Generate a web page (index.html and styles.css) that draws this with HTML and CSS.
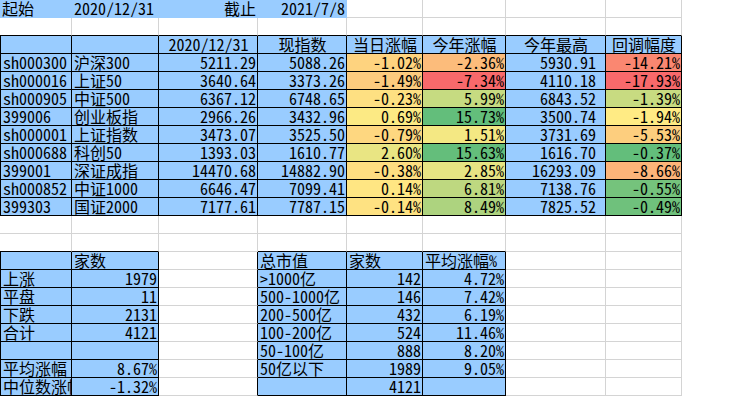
FILE: index.html
```html
<!DOCTYPE html>
<html lang="zh-CN">
<head>
<meta charset="utf-8">
<title>指数涨幅</title>
<link rel="stylesheet" href="styles.css">
</head>
<body>
<div class="sheet">
  <!-- row 1 -->
  <div class="c top">起始</div>
  <div class="c top">2020/12/31</div>
  <div class="c top r">截止</div>
  <div class="c top r">2021/7/8</div>
  <div class="c"></div><div class="c"></div><div class="c"></div><div class="c"></div>
  <!-- row 2 -->
  <div class="c kb"></div><div class="c kb"></div><div class="c kb"></div><div class="c kb"></div>
  <div class="c kb"></div><div class="c kb"></div><div class="c kb"></div><div class="c kb"></div>
  <!-- row 3 header -->
  <div class="c k kl b"></div>
  <div class="c k b"></div>
  <div class="c k b m">2020/12/31</div>
  <div class="c k b m">现指数</div>
  <div class="c k b m">当日涨幅</div>
  <div class="c k b m">今年涨幅</div>
  <div class="c k b m">今年最高</div>
  <div class="c k b m">回调幅度</div>
  <!-- data -->
  <div class="c k kl b">sh000300</div><div class="c k b">沪深300</div>
  <div class="c k b r">5211.29</div><div class="c k b r">5088.26</div>
  <div class="c k r" style="background-color:#FED37F">-1.02%</div>
  <div class="c k r" style="background-color:#FCBC7B">-2.36%</div>
  <div class="c k b r g">5930.91</div>
  <div class="c k r" style="background-color:#FA8771">-14.21%</div>

  <div class="c k kl b">sh000016</div><div class="c k b">上证50</div>
  <div class="c k b r">3640.64</div><div class="c k b r">3373.26</div>
  <div class="c k r" style="background-color:#FDCB7E">-1.49%</div>
  <div class="c k r" style="background-color:#F8696B">-7.34%</div>
  <div class="c k b r g">4110.18</div>
  <div class="c k r" style="background-color:#F8696B">-17.93%</div>

  <div class="c k kl b">sh000905</div><div class="c k b">中证500</div>
  <div class="c k b r">6367.12</div><div class="c k b r">6748.65</div>
  <div class="c k r" style="background-color:#FEE082">-0.23%</div>
  <div class="c k r" style="background-color:#C6DB81">5.99%</div>
  <div class="c k b r g">6843.52</div>
  <div class="c k r" style="background-color:#C8DB81">-1.39%</div>

  <div class="c k kl b">399006</div><div class="c k b">创业板指</div>
  <div class="c k b r">2966.26</div><div class="c k b r">3432.96</div>
  <div class="c k r" style="background-color:#FCEA84">0.69%</div>
  <div class="c k r" style="background-color:#63BE7B">15.73%</div>
  <div class="c k b r g">3500.74</div>
  <div class="c k r" style="background-color:#FFEB84">-1.94%</div>

  <div class="c k kl b">sh000001</div><div class="c k b">上证指数</div>
  <div class="c k b r">3473.07</div><div class="c k b r">3525.50</div>
  <div class="c k r" style="background-color:#FED780">-0.79%</div>
  <div class="c k r" style="background-color:#F4E883">1.51%</div>
  <div class="c k b r g">3731.69</div>
  <div class="c k r" style="background-color:#FDCE7E">-5.53%</div>

  <div class="c k kl b">sh000688</div><div class="c k b">科创50</div>
  <div class="c k b r">1393.03</div><div class="c k b r">1610.77</div>
  <div class="c k r" style="background-color:#E9E583">2.60%</div>
  <div class="c k r" style="background-color:#64BE7B">15.63%</div>
  <div class="c k b r g">1616.70</div>
  <div class="c k r" style="background-color:#63BE7B">-0.37%</div>

  <div class="c k kl b">399001</div><div class="c k b">深证成指</div>
  <div class="c k b r">14470.68</div><div class="c k b r">14882.90</div>
  <div class="c k r" style="background-color:#FEDE81">-0.38%</div>
  <div class="c k r" style="background-color:#E6E483">2.85%</div>
  <div class="c k b r g">16293.09</div>
  <div class="c k r" style="background-color:#FCB479">-8.66%</div>

  <div class="c k kl b">sh000852</div><div class="c k b">中证1000</div>
  <div class="c k b r">6646.47</div><div class="c k b r">7099.41</div>
  <div class="c k r" style="background-color:#FFE683">0.14%</div>
  <div class="c k r" style="background-color:#BED880">6.81%</div>
  <div class="c k b r g">7138.76</div>
  <div class="c k r" style="background-color:#75C37C">-0.55%</div>

  <div class="c k kl b">399303</div><div class="c k b">国证2000</div>
  <div class="c k b r">7177.61</div><div class="c k b r">7787.15</div>
  <div class="c k r" style="background-color:#FEE282">-0.14%</div>
  <div class="c k r" style="background-color:#ADD37F">8.49%</div>
  <div class="c k b r g">7825.52</div>
  <div class="c k r" style="background-color:#6FC17C">-0.49%</div>

  <!-- row 13 -->
  <div class="c"></div><div class="c"></div><div class="c"></div><div class="c"></div>
  <div class="c"></div><div class="c"></div><div class="c"></div><div class="c"></div>
  <!-- row 14 -->
  <div class="c kb"></div><div class="c kb"></div><div class="c"></div>
  <div class="c kb"></div><div class="c kb"></div><div class="c kb"></div>
  <div class="c"></div><div class="c"></div>
  <!-- bottom tables header -->
  <div class="c k kl b"></div><div class="c k b">家数</div><div class="c kr"></div>
  <div class="c k b">总市值</div><div class="c k b">家数</div><div class="c k b">平均涨幅%</div>
  <div class="c"></div><div class="c"></div>

  <div class="c k kl b">上涨</div><div class="c k b r">1979</div><div class="c kr"></div>
  <div class="c k b">&gt;1000亿</div><div class="c k b r">142</div><div class="c k b r">4.72%</div>
  <div class="c"></div><div class="c"></div>

  <div class="c k kl b">平盘</div><div class="c k b r">11</div><div class="c kr"></div>
  <div class="c k b">500-1000亿</div><div class="c k b r">146</div><div class="c k b r">7.42%</div>
  <div class="c"></div><div class="c"></div>

  <div class="c k kl b">下跌</div><div class="c k b r">2131</div><div class="c kr"></div>
  <div class="c k b">200-500亿</div><div class="c k b r">432</div><div class="c k b r">6.19%</div>
  <div class="c"></div><div class="c"></div>

  <div class="c k kl b">合计</div><div class="c k b r">4121</div><div class="c kr"></div>
  <div class="c k b">100-200亿</div><div class="c k b r">524</div><div class="c k b r">11.46%</div>
  <div class="c"></div><div class="c"></div>

  <div class="c k kl b"></div><div class="c k b r"></div><div class="c kr"></div>
  <div class="c k b">50-100亿</div><div class="c k b r">888</div><div class="c k b r">8.20%</div>
  <div class="c"></div><div class="c"></div>

  <div class="c k kl b">平均涨幅</div><div class="c k b r">8.67%</div><div class="c kr"></div>
  <div class="c k b">50亿以下</div><div class="c k b r">1989</div><div class="c k b r">9.05%</div>
  <div class="c"></div><div class="c"></div>

  <div class="c k kl b">中位数涨幅</div><div class="c k b r">-1.32%</div><div class="c kr"></div>
  <div class="c k b"></div><div class="c k b r">4121</div><div class="c k b r"></div>
  <div class="c"></div><div class="c"></div>
</div>
</body>
</html>
```

FILE: styles.css
```css
html, body {
  margin: 0;
  padding: 0;
  background: #ffffff;
}

.sheet {
  display: grid;
  grid-template-columns: 72px 87px 99px 89px 76px 83px 100px 76px;
  grid-auto-rows: 18px;
  width: 682px;
  font-family: "Noto Sans Mono CJK SC", "Noto Sans CJK SC", monospace;
  font-size: 16px;
  color: #000000;
}

.c {
  box-sizing: border-box;
  border-right: 1px solid #d4d4d4;
  border-bottom: 1px solid #d4d4d4;
  padding: 0 1px 0 2px;
  line-height: 17px;
  white-space: nowrap;
  overflow: hidden;
}

.top {
  background-color: #99ccff;
  border-color: transparent;
}

.b {
  background-color: #99ccff;
}

.k {
  border-right-color: #000000;
  border-bottom-color: #000000;
}

.kl {
  border-left: 1px solid #000000;
}

.kb {
  border-bottom-color: #000000;
}

.kr {
  border-right-color: #000000;
}

.r {
  text-align: right;
}

.m {
  text-align: center;
}

.g {
  padding-right: 9px;
}
```
